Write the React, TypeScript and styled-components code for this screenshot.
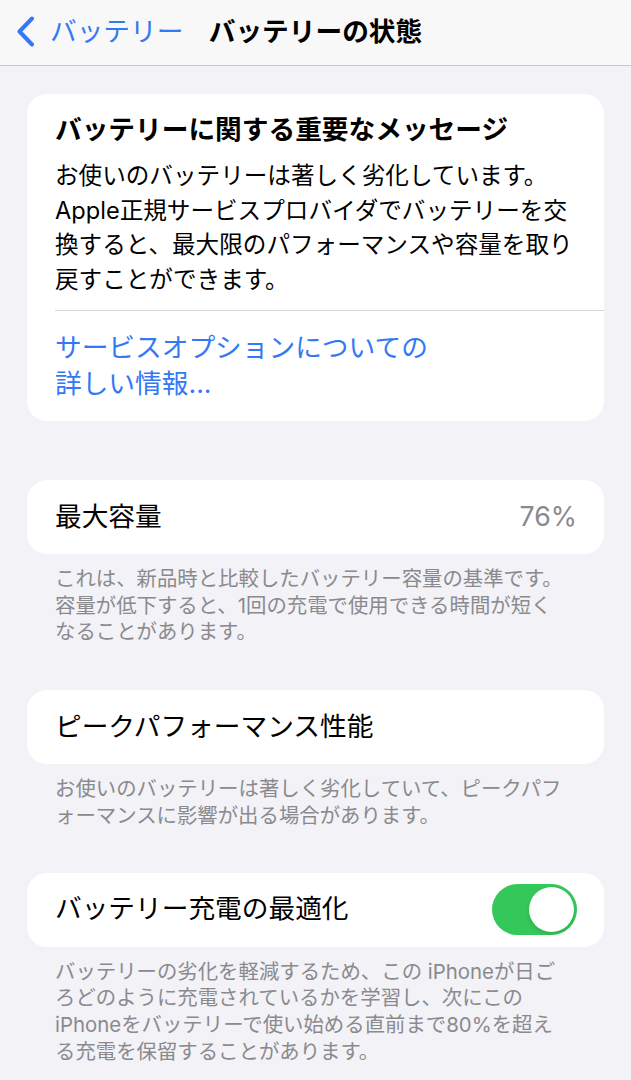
import React from "react";
import styled, { createGlobalStyle } from "styled-components";

const GlobalStyle = createGlobalStyle`
  html, body {
    margin: 0;
    padding: 0;
    background: #f2f2f7;
  }
  body {
    font-family: "Inter", "Noto Sans CJK JP", sans-serif;
    color: #000;
    -webkit-font-smoothing: antialiased;
  }
`;

const BLUE = "#3478f6";
const GRAY = "#8a8a8e";

const Page = styled.div`
  min-height: 1080px;
  background: #f2f2f7;
  overflow: hidden;
`;

const NavBar = styled.header`
  display: grid;
  grid-template-columns: 1fr auto 1fr;
  align-items: center;
  height: 66px;
  background: #f8f8f8;
  border-bottom: 1px solid #c8c8cc;
  box-sizing: border-box;
`;

const BackButton = styled.div`
  display: flex;
  align-items: center;
  gap: 15px;
  padding-left: 16px;
  color: ${BLUE};
  font-size: 26.7px;
  line-height: 1;
  padding-bottom: 2px;
`;

const NavTitle = styled.h1`
  margin: 0;
  font-size: 26.7px;
  font-weight: 700;
  line-height: 1;
  padding-bottom: 2px;
`;

const Content = styled.main`
  display: flex;
  flex-direction: column;
  padding: 28px 27px 0;
`;

const Card = styled.section`
  background: #fff;
  border-radius: 20px;
`;

const MessageCard = styled(Card)`
  display: flex;
  flex-direction: column;
  padding: 18px 0 20px 28px;
`;

const MessageTitle = styled.h2`
  margin: 0;
  font-size: 26.7px;
  font-weight: 700;
  line-height: 34px;
`;

const MessageBody = styled.p`
  margin: 13px 0 0;
  font-size: 23.6px;
  line-height: 34.5px;
  white-space: nowrap;
`;

const Divider = styled.div`
  height: 1px;
  background: #d9d9dd;
  margin-top: 13px;
`;

const LinkText = styled.a`
  display: block;
  margin-top: 18px;
  color: ${BLUE};
  font-size: 26.7px;
  line-height: 36px;
  text-decoration: none;
  white-space: nowrap;
`;

const Group = styled.div<{ $gap: number }>`
  display: flex;
  flex-direction: column;
  margin-top: ${(p) => p.$gap}px;
`;

const RowCard = styled(Card)`
  display: flex;
  align-items: center;
  justify-content: space-between;
  height: 74px;
  padding: 0 27px 0 28px;
  font-size: 26.7px;
`;

const RowLabel = styled.span`
  line-height: 1;
  padding-bottom: 2px;
`;

const RowValue = styled.span`
  color: ${GRAY};
  line-height: 1;
  padding-bottom: 2px;
`;

const Footer = styled.p`
  margin: 0;
  padding: 12px 28px 0;
  font-size: 20.4px;
  line-height: 26.7px;
  color: ${GRAY};
  white-space: nowrap;
`;

const Toggle = styled.div<{ $on: boolean }>`
  display: flex;
  align-items: center;
  justify-content: ${(p) => (p.$on ? "flex-end" : "flex-start")};
  width: 85px;
  height: 51px;
  padding: 3px;
  box-sizing: border-box;
  border-radius: 26px;
  background: ${(p) => (p.$on ? "#34c759" : "#e9e9ea")};
`;

const Knob = styled.div`
  width: 45px;
  height: 45px;
  border-radius: 50%;
  background: #fff;
  box-shadow: 0 2px 4px rgba(0, 0, 0, 0.12);
`;

const Chevron = () => (
  <svg width="19" height="31" viewBox="0 0 19 31" fill="none">
    <path
      d="M16 2.5 L3.5 15.5 L16 28.5"
      stroke={BLUE}
      strokeWidth="4"
      strokeLinecap="round"
      strokeLinejoin="round"
    />
  </svg>
);

export default function App() {
  return (
    <>
      <GlobalStyle />
      <Page>
        <NavBar>
          <BackButton>
            <Chevron />
            <span>バッテリー</span>
          </BackButton>
          <NavTitle>バッテリーの状態</NavTitle>
          <div />
        </NavBar>
        <Content>
          <MessageCard>
            <MessageTitle>バッテリーに関する重要なメッセージ</MessageTitle>
            <MessageBody>
              お使いのバッテリーは著しく劣化しています。
              <br />
              Apple正規サービスプロバイダでバッテリーを交
              <br />
              換すると、最大限のパフォーマンスや容量を取り
              <br />
              戻すことができます。
            </MessageBody>
            <Divider />
            <LinkText>
              サービスオプションについての
              <br />
              詳しい情報...
            </LinkText>
          </MessageCard>

          <Group $gap={59}>
            <RowCard>
              <RowLabel>最大容量</RowLabel>
              <RowValue>76%</RowValue>
            </RowCard>
            <Footer>
              これは、新品時と比較したバッテリー容量の基準です。
              <br />
              容量が低下すると、1回の充電で使用できる時間が短く
              <br />
              なることがあります。
            </Footer>
          </Group>

          <Group $gap={44}>
            <RowCard>
              <RowLabel>ピークパフォーマンス性能</RowLabel>
            </RowCard>
            <Footer>
              お使いのバッテリーは著しく劣化していて、ピークパフ
              <br />
              ォーマンスに影響が出る場合があります。
            </Footer>
          </Group>

          <Group $gap={43}>
            <RowCard>
              <RowLabel>バッテリー充電の最適化</RowLabel>
              <Toggle $on>
                <Knob />
              </Toggle>
            </RowCard>
            <Footer>
              バッテリーの劣化を軽減するため、この iPhoneが日ご
              <br />
              ろどのように充電されているかを学習し、次にこの
              <br />
              iPhoneをバッテリーで使い始める直前まで80%を超え
              <br />
              る充電を保留することがあります。
            </Footer>
          </Group>
        </Content>
      </Page>
    </>
  );
}
